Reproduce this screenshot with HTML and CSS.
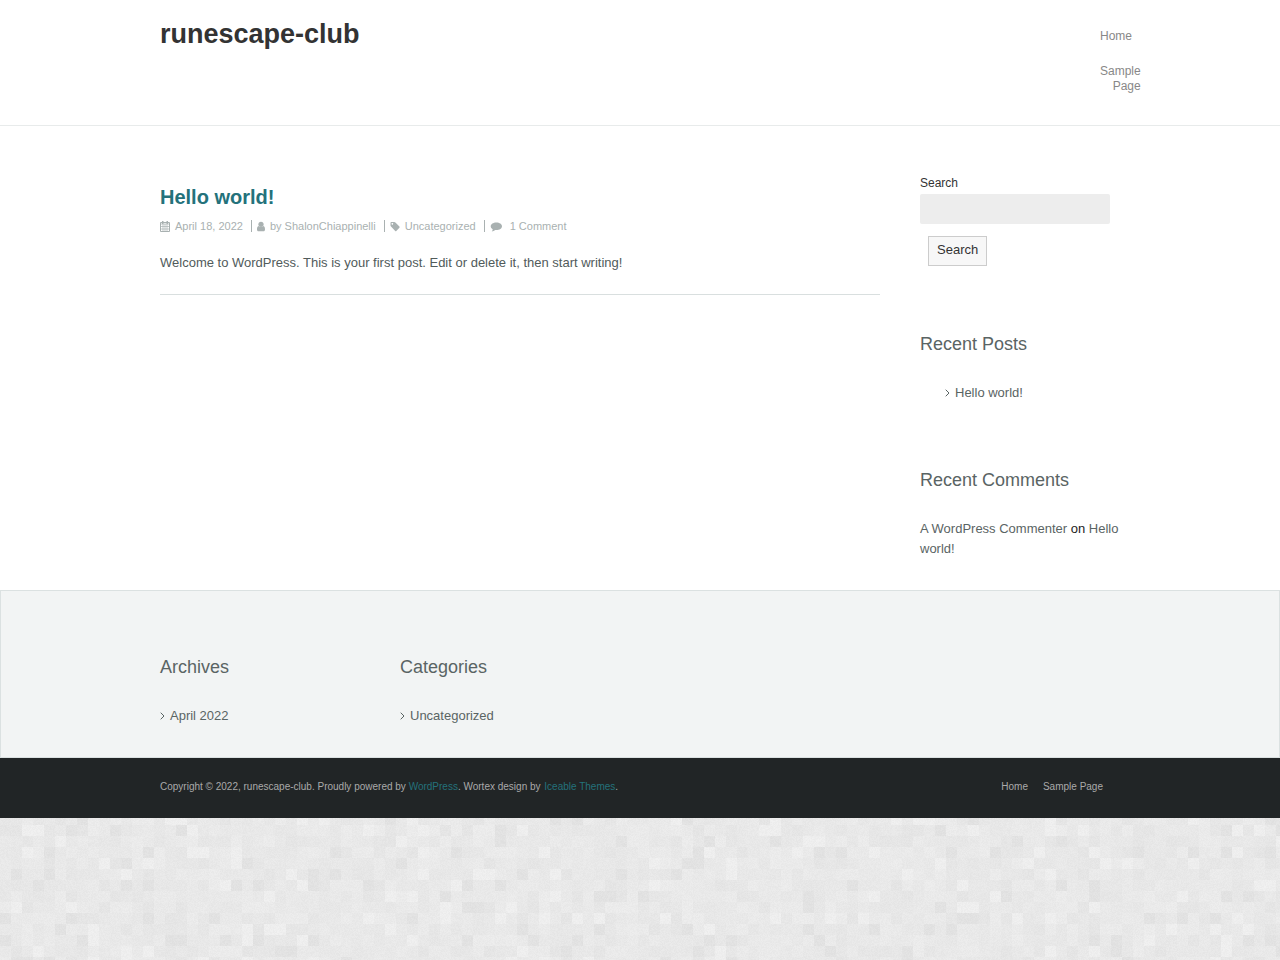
FILE: index.html
```html
<!DOCTYPE html>
<html lang="en">
<head>
  <meta charset="UTF-8">
  <meta name="viewport" content="width=device-width, initial-scale=1">
  <title>runescape-club</title>
  <link rel="stylesheet" href="styles.css">
</head>
<body>
  <canvas class="texture" id="texture"></canvas>

  <header class="header">
    <div class="container header-inner">
      <h1 class="site-title"><a href="#">runescape-club</a></h1>
      <nav class="navbar">
        <ul>
          <li><a href="#">Home</a></li>
          <li><a href="#">Sample Page</a></li>
        </ul>
      </nav>
    </div>
  </header>

  <div class="main">
    <div class="container columns">
      <main class="content">
        <article class="post">
          <h2 class="post-title"><a href="#">Hello world!</a></h2>
          <div class="post-meta">
            <span class="meta-item">
              <svg width="10" height="12" viewBox="0 0 10 12"><path fill="none" stroke="currentColor" d="M.5 2.500h9v9h-9z"/><path fill="none" stroke="currentColor" stroke-width=".7" d="M.5 4h9M3 4v7.500M5 4v7.500M7 4v7.500M.5 6.500h9M.5 9h9"/><path fill="currentColor" d="M2 1h1.500v3H2zM6.500 1H8v3H6.500z"/></svg>
              <a href="#">April 18, 2022</a>
            </span>
            <span class="meta-item">
              <svg width="8" height="12" viewBox="0 0 8 12"><circle cx="4" cy="4.300" r="2.600" fill="currentColor"/><path fill="currentColor" d="M1.600 6q2.400 2.200 4.800 0C7.700 6.400 8 7.900 8 9.500 8 10.700 7.400 11.300 6.500 11.300h-5C.6 11.300 0 10.700 0 9.500 0 7.900.3 6.400 1.600 6z"/></svg>
              <span>by <a href="#">ShalonChiappinelli</a></span>
            </span>
            <span class="meta-item">
              <svg width="10" height="12" viewBox="0 0 10 12"><path fill="currentColor" fill-rule="evenodd" d="M.5 2.800Q.5 2 1.300 2h3q.6 0 1.100.5l4 4q.6.600 0 1.200L6.300 10.900q-.5.500-1.100 0L1 6.600Q.5 6.100.5 5.500zM2.300 3a.8.800 0 1 0 .1 0z"/></svg>
              <a href="#">Uncategorized</a>
            </span>
            <span class="meta-item comments">
              <svg width="12" height="12" viewBox="0 0 12 12"><path fill="currentColor" d="M6.300 2.500C9.600 2.500 12 4.200 12 6.300s-2.400 3.800-5.700 3.800l-1-.1C4.300 10.900 3 11.400 1.700 11.500c.6-.6 1-1.400 1-2.300C1.400 8.500.700 7.500.7 6.300c0-2.100 2.500-3.800 5.600-3.800z"/></svg>
              <a href="#">1 Comment</a>
            </span>
          </div>
          <p>Welcome to WordPress. This is your first post. Edit or delete it, then start writing!</p>
        </article>
      </main>

      <aside class="sidebar">
        <form class="search">
          <label for="s">Search</label>
          <input type="search" id="s" name="s">
          <button type="submit">Search</button>
        </form>

        <section class="widget">
          <h3>Recent Posts</h3>
          <ul class="links indented">
            <li><svg width="5" height="8" viewBox="0 0 5 8"><path d="M.7.7 4 4 .7 7.300"/></svg><a href="#">Hello world!</a></li>
          </ul>
        </section>

        <section class="widget">
          <h3>Recent Comments</h3>
          <p><a href="#">A WordPress Commenter</a> on <a href="#">Hello world!</a></p>
        </section>
      </aside>
    </div>
  </div>

  <div class="footer-widgets">
    <div class="container footer-columns">
      <section class="widget">
        <h3>Archives</h3>
        <ul class="links">
          <li><svg width="5" height="8" viewBox="0 0 5 8"><path d="M.7.7 4 4 .7 7.300"/></svg><a href="#">April 2022</a></li>
        </ul>
      </section>
      <section class="widget">
        <h3>Categories</h3>
        <ul class="links">
          <li><svg width="5" height="8" viewBox="0 0 5 8"><path d="M.7.7 4 4 .7 7.300"/></svg><a href="#">Uncategorized</a></li>
        </ul>
      </section>
    </div>
  </div>

  <footer class="footer">
    <div class="container footer-inner">
      <p>Copyright © 2022, runescape-club. Proudly powered by <a href="#">WordPress</a>. Wortex design by <a class="designer" href="#">Iceable Themes</a>.</p>
      <ul class="footer-nav">
        <li><a href="#">Home</a></li>
        <li><a href="#">Sample Page</a></li>
      </ul>
    </div>
  </footer>

  <script src="texture.js"></script>
</body>
</html>
```
FILE: styles.css
```css
* {
  box-sizing: border-box;
}
body {
  margin: 0;
  background: #e8e8e8;
  color: #333;
  font-family: "Liberation Sans", Arial, sans-serif;
  font-size: 13px;
  line-height: 20px;
}
h1, h2, h3, p, ul {
  margin: 0;
  padding: 0;
}
ul {
  list-style: none;
}
a {
  color: inherit;
  text-decoration: none;
}
.texture {
  position: fixed;
  top: 0;
  left: 0;
  z-index: -1;
}
.container {
  max-width: 960px;
  margin: 0 auto;
}

/* header */
.header {
  background: #fff;
  border-bottom: 1px solid #e8ebeb;
}
.header-inner {
  display: flex;
  justify-content: space-between;
  padding: 14px 0 31px;
}
.site-title {
  font-size: 27px;
  line-height: 40px;
  color: #333;
}
.navbar {
  width: 40px;
  margin-right: -20px;
  padding-top: 15px;
  color: #888;
  font-size: 12px;
  line-height: 15px;
}
.navbar ul {
  display: flex;
  flex-direction: column;
  align-items: flex-start;
  gap: 20px;
  text-align: right;
}

/* content */
.main {
  background: #fff;
}
.columns {
  display: flex;
  gap: 40px;
  padding: 47px 0 31px;
}
.content {
  flex: 1;
}
.post {
  padding: 9px 0 21px;
  border-bottom: 1px solid #d9dfdf;
}
.post p {
  color: #515b5b;
}
.post-title {
  color: #24727b;
  font-size: 20px;
  line-height: 30px;
}
.post-meta {
  display: flex;
  margin: 8px 0 21px;
  color: #a9b1b1;
  font-size: 11px;
  line-height: 12px;
}
.meta-item {
  display: flex;
  gap: 5px;
  margin-right: 5px;
  padding-right: 8px;
  border-right: 1px solid #a9b1b1;
}
.meta-item.comments {
  gap: 8px;
  border: 0;
}

/* sidebar */
.sidebar {
  width: 200px;
}
.sidebar .widget {
  margin-top: 62px;
}
.search {
  display: flex;
  flex-direction: column;
  align-items: flex-start;
  font-size: 12px;
}
.sidebar .search + .widget {
  margin-top: 63px;
}
.search input {
  width: 190px;
  height: 30px;
  margin-top: 1px;
  border: 0;
  border-radius: 2px;
  background: #ededed;
}
.search button {
  height: 30px;
  margin: 12px 8px 0;
  padding: 0 8px 2px;
  border: 1px solid #ccc;
  background: #f7f7f7;
  color: #333;
  font: inherit;
  font-size: 13px;
}
.widget {
  color: #222;
}
.widget h3 {
  margin-bottom: 24px;
  color: #5a6464;
  font-size: 18px;
  font-weight: normal;
  line-height: 30px;
}
.widget a {
  color: #5a6464;
}
.links li {
  display: flex;
  align-items: center;
  gap: 5px;
}
.links path {
  fill: none;
  stroke: #5a6464;
}
.links.indented {
  padding: 0 0 0 25px;
}

/* footer */
.footer-widgets {
  background: #f2f4f4;
  border: 1px solid #dbe1e1;
}
.footer-columns {
  display: grid;
  grid-template-columns: repeat(4, 1fr);
  padding: 61px 0 31px;
}
.footer {
  background: #212526;
  color: #aaa;
  font-size: 10px;
}
.footer-inner {
  display: flex;
  justify-content: space-between;
  padding: 19px 0 21px;
}
.footer p a {
  color: #24727b;
}
.footer .designer {
  margin-left: 1px;
}
.footer-nav {
  display: flex;
  gap: 15px;
  margin-right: 17px;
}
```
FILE: texture.js
```javascript
const canvas = document.getElementById('texture');
const ctx = canvas.getContext('2d');
const size = 11;

// most tiles share a few middle shades, light and dark ones are rare
const shades = [226, 229, 230, 231, 231, 232, 232, 232, 233, 233, 234, 234, 235, 238];

// small seeded generator, so the tiles stay the same on every load
let seed = 7;
function random() {
  seed = (seed * 16807) % 2147483647;
  return seed / 2147483647;
}

function drawTexture() {
  seed = 7;
  canvas.width = window.innerWidth;
  canvas.height = window.innerHeight;
  for (let y = 0; y < canvas.height; y += size) {
    for (let x = 0; x < canvas.width; x += size) {
      const shade = shades[Math.floor(random() * shades.length)];
      ctx.fillStyle = `rgb(${shade}, ${shade}, ${shade})`;
      ctx.fillRect(x, y, size, size);
    }
  }

  // fine grain over the tiles
  const image = ctx.getImageData(0, 0, canvas.width, canvas.height);
  for (let i = 0; i < image.data.length; i += 4) {
    const grain = Math.round((random() - 0.5) * 6);
    image.data[i] += grain;
    image.data[i + 1] += grain;
    image.data[i + 2] += grain;
  }
  ctx.putImageData(image, 0, 0);
}

drawTexture();
window.addEventListener('resize', drawTexture);
```
